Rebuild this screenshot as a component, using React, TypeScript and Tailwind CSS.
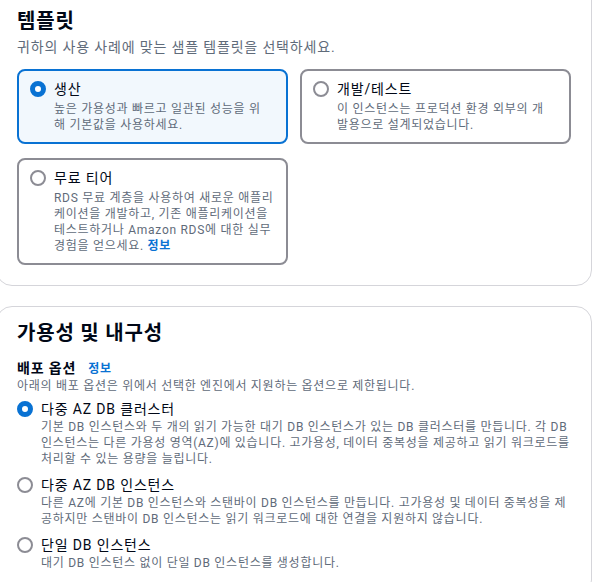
import React from "react";

const FONT = { fontFamily: 'Roboto, "Noto Sans CJK KR", sans-serif' };

function Radio({ checked }: { checked?: boolean }) {
  return checked ? (
    <span className="mt-[2px] block h-4 w-4 shrink-0 rounded-full border-[5px] border-[#0972d3] bg-white" />
  ) : (
    <span className="mt-[2px] block h-4 w-4 shrink-0 rounded-full border-2 border-[#8c8c94] bg-white" />
  );
}

function Lines({ lines }: { lines: React.ReactNode[] }) {
  return (
    <>
      {lines.map((l, i) => (
        <span key={i} className="block whitespace-nowrap">
          {l}
        </span>
      ))}
    </>
  );
}

function Tile({
  title,
  lines,
  checked,
}: {
  title: string;
  lines: React.ReactNode[];
  checked?: boolean;
}) {
  return (
    <div
      className={
        checked
          ? "flex gap-2 rounded-lg border-2 border-[#0972d3] bg-[#f2f8fd] pb-[9px] pl-[11px] pr-[12px] pt-2"
          : "flex gap-2 rounded-lg border-2 border-[#8c8c94] bg-white pb-[9px] pl-[11px] pr-[12px] pt-2"
      }
    >
      <Radio checked={checked} />
      <div className="min-w-0">
        <div className="text-[14px] leading-5 tracking-[0.06em] text-[#000716]">{title}</div>
        <div className="mt-[2px] text-[12px] leading-4 tracking-[0.06em] text-[#5f6b7a]">
          <Lines lines={lines} />
        </div>
      </div>
    </div>
  );
}

function Option({
  title,
  lines,
  checked,
}: {
  title: string;
  lines: React.ReactNode[];
  checked?: boolean;
}) {
  return (
    <div className="flex gap-2">
      <Radio checked={checked} />
      <div className="min-w-0">
        <div className="text-[14px] leading-5 tracking-[0.06em] text-[#000716]">{title}</div>
        <div className="text-[12px] leading-4 tracking-[0.06em] text-[#5f6b7a]">
          <Lines lines={lines} />
        </div>
      </div>
    </div>
  );
}

export default function App() {
  return (
    <div className="min-h-screen overflow-hidden bg-white" style={FONT}>
      <div className="-ml-1 w-[596px]">
        <section className="-mt-5 rounded-2xl border border-[#d5d5da] bg-white px-5 pb-5 pt-[28px]">
          <h2 className="text-[20px] font-bold leading-6 tracking-[0.04em] text-[#000716]">템플릿</h2>
          <p className="mt-1 text-[14px] leading-5 tracking-[0.06em] text-[#5f6b7a]">
            귀하의 사용 사례에 맞는 샘플 템플릿을 선택하세요.
          </p>
          <div className="mt-3 grid grid-cols-2 gap-x-3 gap-y-[14px]">
            <Tile
              title="생산"
              checked
              lines={["높은 가용성과 빠르고 일관된 성능을 위", "해 기본값을 사용하세요."]}
            />
            <Tile
              title="개발/테스트"
              lines={["이 인스턴스는 프로덕션 환경 외부의 개", "발용으로 설계되었습니다."]}
            />
            <Tile
              title="무료 티어"
              lines={[
                "RDS 무료 계층을 사용하여 새로운 애플리",
                "케이션을 개발하고, 기존 애플리케이션을",
                "테스트하거나 Amazon RDS에 대한 실무",
                <>
                  경험을 얻으세요. <span className="font-bold text-[#0972d3]">정보</span>
                </>,
              ]}
            />
          </div>
        </section>

        <section className="mt-5 rounded-2xl border border-[#d5d5da] bg-white px-5 pb-6 pt-[14px]">
          <h2 className="text-[20px] font-bold leading-6 tracking-[0.04em] text-[#000716]">
            가용성 및 내구성
          </h2>
          <div className="mt-[13px] flex items-baseline gap-3">
            <span className="text-[14px] font-bold leading-5 tracking-[0.06em] text-[#000716]">
              배포 옵션
            </span>
            <span className="text-[12px] font-bold leading-4 tracking-[0.06em] text-[#0972d3]">
              정보
            </span>
          </div>
          <p className="text-[12px] leading-4 tracking-[0.06em] text-[#5f6b7a]">
            아래의 배포 옵션은 위에서 선택한 엔진에서 지원하는 옵션으로 제한됩니다.
          </p>
          <div className="mt-[5px] flex flex-col gap-2">
            <Option
              checked
              title="다중 AZ DB 클러스터"
              lines={[
                "기본 DB 인스턴스와 두 개의 읽기 가능한 대기 DB 인스턴스가 있는 DB 클러스터를 만듭니다. 각 DB",
                "인스턴스는 다른 가용성 영역(AZ)에 있습니다. 고가용성, 데이터 중복성을 제공하고 읽기 워크로드를",
                "처리할 수 있는 용량을 늘립니다.",
              ]}
            />
            <Option
              title="다중 AZ DB 인스턴스"
              lines={[
                "다른 AZ에 기본 DB 인스턴스와 스탠바이 DB 인스턴스를 만듭니다. 고가용성 및 데이터 중복성을 제",
                "공하지만 스탠바이 DB 인스턴스는 읽기 워크로드에 대한 연결을 지원하지 않습니다.",
              ]}
            />
            <Option
              title="단일 DB 인스턴스"
              lines={["대기 DB 인스턴스 없이 단일 DB 인스턴스를 생성합니다."]}
            />
          </div>
        </section>
      </div>
    </div>
  );
}
